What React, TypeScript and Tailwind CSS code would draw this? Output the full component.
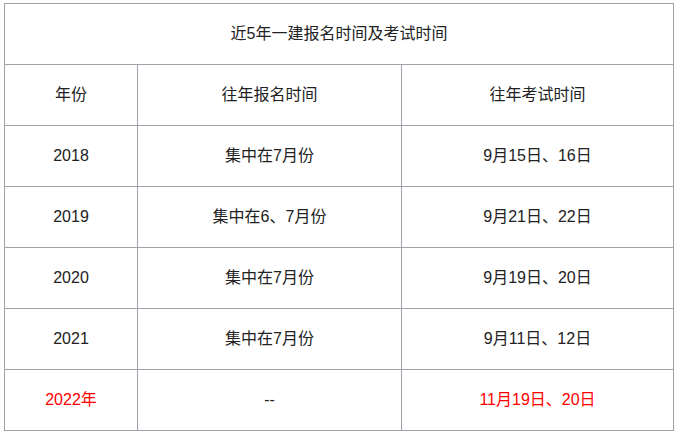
const rows = [
  { year: "2018", sign: "集中在7月份", exam: "9月15日、16日" },
  { year: "2019", sign: "集中在6、7月份", exam: "9月21日、22日" },
  { year: "2020", sign: "集中在7月份", exam: "9月19日、20日" },
  { year: "2021", sign: "集中在7月份", exam: "9月11日、12日" },
];

export default function App() {
  return (
    <div
      className="min-h-[435px] w-[678px] bg-white pl-[4px] pt-[3px] text-[16px] text-[#222]"
      style={{ fontFamily: '"Liberation Sans", "Noto Sans CJK SC", sans-serif' }}
    >
      <div className="w-[670px] border border-[#a0a0aa]">
        <div className="flex h-[61px] items-center justify-center border-b border-[#a0a0aa]">
          近5年一建报名时间及考试时间
        </div>
        <div className="grid h-[61px] grid-cols-[133px_264px_1fr] border-b border-[#a0a0aa]">
          <div className="flex items-center justify-center border-r border-[#a0a0aa]">年份</div>
          <div className="flex items-center justify-center border-r border-[#a0a0aa]">往年报名时间</div>
          <div className="flex items-center justify-center">往年考试时间</div>
        </div>
        {rows.map((r) => (
          <div
            key={r.year}
            className="grid h-[61px] grid-cols-[133px_264px_1fr] border-b border-[#a0a0aa]"
          >
            <div className="flex items-center justify-center border-r border-[#a0a0aa]">{r.year}</div>
            <div className="flex items-center justify-center border-r border-[#a0a0aa]">{r.sign}</div>
            <div className="flex items-center justify-center">{r.exam}</div>
          </div>
        ))}
        <div className="grid h-[60px] grid-cols-[133px_264px_1fr]">
          <div className="flex items-center justify-center border-r border-[#a0a0aa] text-[#ff0000]">
            2022年
          </div>
          <div className="flex items-center justify-center border-r border-[#a0a0aa]">--</div>
          <div className="flex items-center justify-center text-[#ff0000]">11月19日、20日</div>
        </div>
      </div>
    </div>
  );
}
